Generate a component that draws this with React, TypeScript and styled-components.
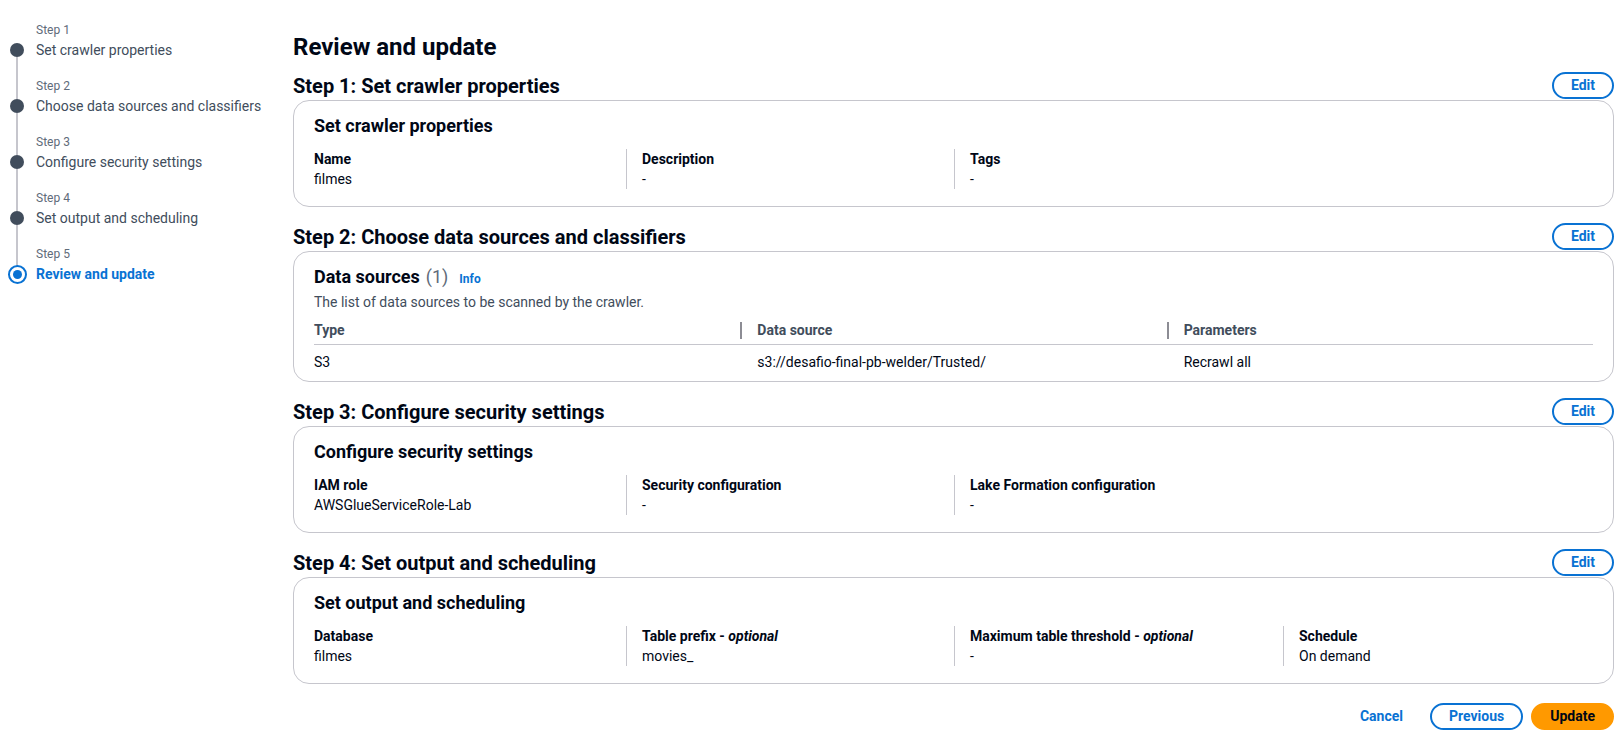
import React from "react";
import styled, { createGlobalStyle } from "styled-components";

const GlobalStyle = createGlobalStyle`
  html, body { margin: 0; padding: 0; background: #ffffff; }
  body {
    font-family: Roboto, "Liberation Sans", Arial, sans-serif;
    color: #000716;
    font-size: 14px;
    line-height: 20px;
    -webkit-font-smoothing: antialiased;
    overflow: hidden;
  }
  * { box-sizing: border-box; }
`;

const Page = styled.div`
  display: flex;
  align-items: flex-start;
`;

/* ---------- Sidebar ---------- */
const Sidebar = styled.nav`
  width: 293px;
  flex: none;
  padding: 20px 0 0 10px;
`;

const StepItem = styled.div`
  display: grid;
  grid-template-columns: 14px 1fr;
  column-gap: 12px;
`;

const Indicator = styled.div`
  display: flex;
  flex-direction: column;
  align-items: center;
`;

const Line = styled.div<{ $hidden?: boolean; $grow?: boolean }>`
  width: 2px;
  background: ${(p) => (p.$hidden ? "transparent" : "#c6c6cd")};
  ${(p) => (p.$grow ? "flex: 1;" : "height: 23px; flex: none;")}
`;

const Dot = styled.div<{ $active?: boolean }>`
  width: ${(p) => (p.$active ? "19px" : "14px")};
  height: ${(p) => (p.$active ? "19px" : "14px")};
  margin: ${(p) => (p.$active ? "-2.5px 0" : "0")};
  border-radius: 50%;
  flex: none;
  background: ${(p) => (p.$active ? "#ffffff" : "#414d5c")};
  border: ${(p) => (p.$active ? "2.5px solid #0972d3" : "none")};
  display: flex;
  align-items: center;
  justify-content: center;
  &::after {
    content: "";
    display: ${(p) => (p.$active ? "block" : "none")};
    width: 9px;
    height: 9px;
    border-radius: 50%;
    background: #0972d3;
  }
`;

const StepText = styled.div`
  padding-bottom: 16px;
`;

const StepLabel = styled.div`
  font-size: 12px;
  line-height: 20px;
  color: #5f6b7a;
`;

const StepTitle = styled.div<{ $active?: boolean }>`
  font-size: 14px;
  line-height: 20px;
  color: ${(p) => (p.$active ? "#0972d3" : "#414d5c")};
  font-weight: ${(p) => (p.$active ? 700 : 400)};
`;

/* ---------- Main ---------- */
const Main = styled.main`
  flex: 1;
  min-width: 0;
  padding: 32px 7px 0 0;
`;

const PageTitle = styled.h1`
  margin: 0 0 10px;
  font-size: 24px;
  line-height: 30px;
  font-weight: 700;
`;

const Section = styled.section`
  & + & {
    margin-top: 16px;
  }
`;

const SectionHeader = styled.div`
  display: flex;
  align-items: center;
  justify-content: space-between;
  height: 27px;
  margin-bottom: 1px;
`;

const SectionTitle = styled.h2`
  margin: 0;
  font-size: 20px;
  line-height: 24px;
  font-weight: 700;
`;

const Button = styled.button<{ $variant?: "normal" | "primary" | "link" }>`
  font-family: inherit;
  font-size: 14px;
  line-height: 21px;
  font-weight: 700;
  border-radius: 20px;
  padding: 1px 17px;
  cursor: pointer;
  border: 2px solid
    ${(p) =>
      p.$variant === "primary"
        ? "#ff9900"
        : p.$variant === "link"
        ? "transparent"
        : "#0972d3"};
  background: ${(p) => (p.$variant === "primary" ? "#ff9900" : "#ffffff")};
  color: ${(p) => (p.$variant === "primary" ? "#000716" : "#0972d3")};
`;

const Container = styled.div<{ $table?: boolean }>`
  border: 1px solid #c6c6cd;
  border-radius: 16px;
  padding: ${(p) => (p.$table ? "14px 20px 6px" : "14px 20px 17px")};
`;

const ContainerTitle = styled.h3`
  margin: 0;
  font-size: 18px;
  line-height: 22px;
  font-weight: 700;
  display: flex;
  align-items: baseline;
`;

const Counter = styled.span`
  font-weight: 400;
  color: #5f6b7a;
  margin-left: 6px;
`;

const InfoLink = styled.a`
  font-size: 12px;
  font-weight: 700;
  color: #0972d3;
  margin-left: 11px;
  text-decoration: none;
`;

const Description = styled.p`
  margin: 2px 0 0;
  font-size: 14px;
  line-height: 20px;
  color: #414d5c;
`;

const TextGrid = styled.div`
  display: grid;
  grid-template-columns: 312px 328px 329px 1fr;
  margin-top: 12px;
`;

const Column = styled.div<{ $first?: boolean }>`
  border-left: ${(p) => (p.$first ? "none" : "1px solid #c6c6cd")};
  padding-left: ${(p) => (p.$first ? "0" : "15px")};
`;

const Key = styled.div`
  font-weight: 700;
  line-height: 20px;
`;

const Value = styled.div`
  line-height: 20px;
`;

const Optional = styled.i`
  font-weight: 700;
`;

const Table = styled.div`
  margin-top: 4px;
`;

const TableRow = styled.div<{ $header?: boolean }>`
  display: grid;
  grid-template-columns: repeat(3, 1fr);
  border-bottom: ${(p) => (p.$header ? "1px solid #c6c6cd" : "none")};
  padding: ${(p) => (p.$header ? "4px 0" : "7px 0 3px")};
`;

const HeaderCell = styled.div`
  display: flex;
  align-items: center;
  font-weight: 700;
  color: #414d5c;
`;

const HeaderDivider = styled.span`
  width: 2px;
  height: 17px;
  background: #8c8c94;
  margin-right: 15px;
`;

const Cell = styled.div<{ $indent?: boolean }>`
  padding-left: ${(p) => (p.$indent ? "17px" : "0")};
`;

const Footer = styled.div`
  display: flex;
  justify-content: flex-end;
  gap: 8px;
  margin-top: 19px;
`;

/* ---------- Data ---------- */
const steps = [
  "Set crawler properties",
  "Choose data sources and classifiers",
  "Configure security settings",
  "Set output and scheduling",
  "Review and update",
];

type KV = { key: React.ReactNode; value: string };

const KeyValueGrid: React.FC<{ items: KV[] }> = ({ items }) => (
  <TextGrid>
    {items.map((it, i) => (
      <Column key={i} $first={i === 0}>
        <Key>{it.key}</Key>
        <Value>{it.value}</Value>
      </Column>
    ))}
  </TextGrid>
);

const EditHeader: React.FC<{ title: string }> = ({ title }) => (
  <SectionHeader>
    <SectionTitle>{title}</SectionTitle>
    <Button>Edit</Button>
  </SectionHeader>
);

export default function App() {
  return (
    <>
      <GlobalStyle />
      <Page>
        <Sidebar>
          {steps.map((s, i) => {
            const active = i === steps.length - 1;
            return (
              <StepItem key={s}>
                <Indicator>
                  <Line $hidden={i === 0} />
                  <Dot $active={active} />
                  <Line $grow $hidden={active} />
                </Indicator>
                <StepText>
                  <StepLabel>Step {i + 1}</StepLabel>
                  <StepTitle $active={active}>{s}</StepTitle>
                </StepText>
              </StepItem>
            );
          })}
        </Sidebar>

        <Main>
          <PageTitle>Review and update</PageTitle>

          <Section>
            <EditHeader title="Step 1: Set crawler properties" />
            <Container>
              <ContainerTitle>Set crawler properties</ContainerTitle>
              <KeyValueGrid
                items={[
                  { key: "Name", value: "filmes" },
                  { key: "Description", value: "-" },
                  { key: "Tags", value: "-" },
                ]}
              />
            </Container>
          </Section>

          <Section>
            <EditHeader title="Step 2: Choose data sources and classifiers" />
            <Container $table>
              <ContainerTitle>
                Data sources<Counter>(1)</Counter>
                <InfoLink href="#">Info</InfoLink>
              </ContainerTitle>
              <Description>The list of data sources to be scanned by the crawler.</Description>
              <Table>
                <TableRow $header>
                  <HeaderCell>Type</HeaderCell>
                  <HeaderCell>
                    <HeaderDivider />
                    Data source
                  </HeaderCell>
                  <HeaderCell>
                    <HeaderDivider />
                    Parameters
                  </HeaderCell>
                </TableRow>
                <TableRow>
                  <Cell>S3</Cell>
                  <Cell $indent>s3://desafio-final-pb-welder/Trusted/</Cell>
                  <Cell $indent>Recrawl all</Cell>
                </TableRow>
              </Table>
            </Container>
          </Section>

          <Section>
            <EditHeader title="Step 3: Configure security settings" />
            <Container>
              <ContainerTitle>Configure security settings</ContainerTitle>
              <KeyValueGrid
                items={[
                  { key: "IAM role", value: "AWSGlueServiceRole-Lab" },
                  { key: "Security configuration", value: "-" },
                  { key: "Lake Formation configuration", value: "-" },
                ]}
              />
            </Container>
          </Section>

          <Section>
            <EditHeader title="Step 4: Set output and scheduling" />
            <Container>
              <ContainerTitle>Set output and scheduling</ContainerTitle>
              <KeyValueGrid
                items={[
                  { key: "Database", value: "filmes" },
                  {
                    key: (
                      <>
                        Table prefix - <Optional>optional</Optional>
                      </>
                    ),
                    value: "movies_",
                  },
                  {
                    key: (
                      <>
                        Maximum table threshold - <Optional>optional</Optional>
                      </>
                    ),
                    value: "-",
                  },
                  { key: "Schedule", value: "On demand" },
                ]}
              />
            </Container>
          </Section>

          <Footer>
            <Button $variant="link">Cancel</Button>
            <Button>Previous</Button>
            <Button $variant="primary">Update</Button>
          </Footer>
        </Main>
      </Page>
    </>
  );
}
